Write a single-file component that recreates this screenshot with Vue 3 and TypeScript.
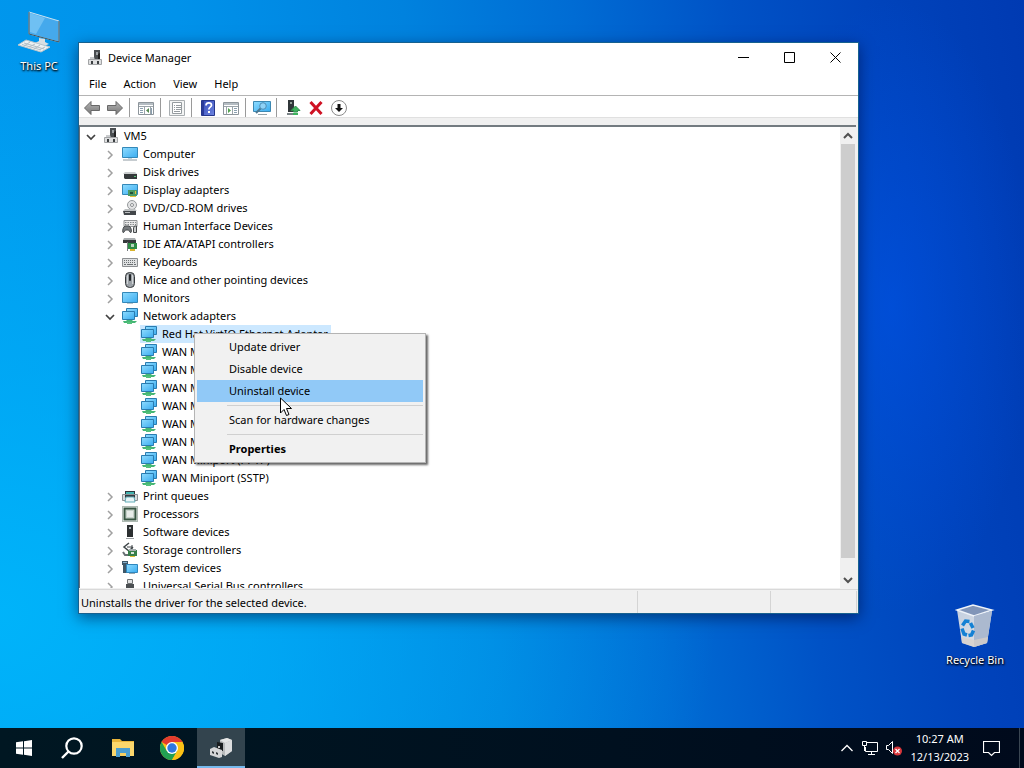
<script setup lang="ts">
import { ref } from 'vue'

interface TreeNode {
  label: string
  icon: string
  open?: boolean
  selected?: boolean
  children?: TreeNode[]
}

interface TreeRow {
  node: TreeNode
  level: number
  hasExpander: boolean
}

const adapters: TreeNode[] = [
  { label: 'Red Hat VirtIO Ethernet Adapter', icon: 'network', selected: true },
  ...['IKEv2', 'IP', 'IPv6', 'L2TP', 'Network Monitor', 'PPPOE', 'PPTP', 'SSTP'].map((name) => ({
    label: `WAN Miniport (${name})`,
    icon: 'network',
  })),
]

const categories: TreeNode[] = [
  { label: 'Computer', icon: 'computer' },
  { label: 'Disk drives', icon: 'disk' },
  { label: 'Display adapters', icon: 'display' },
  { label: 'DVD/CD-ROM drives', icon: 'dvd' },
  { label: 'Human Interface Devices', icon: 'hid' },
  { label: 'IDE ATA/ATAPI controllers', icon: 'ide' },
  { label: 'Keyboards', icon: 'keyboard' },
  { label: 'Mice and other pointing devices', icon: 'mouse' },
  { label: 'Monitors', icon: 'monitor' },
  { label: 'Network adapters', icon: 'network', open: true, children: adapters },
  { label: 'Print queues', icon: 'printer' },
  { label: 'Processors', icon: 'cpu' },
  { label: 'Software devices', icon: 'software' },
  { label: 'Storage controllers', icon: 'storage' },
  { label: 'System devices', icon: 'system' },
  { label: 'Universal Serial Bus controllers', icon: 'usb' },
]

const root: TreeNode = { label: 'VM5', icon: 'devmgr', open: true, children: categories }

function flatten(node: TreeNode, level: number): TreeRow[] {
  const own: TreeRow = { node, level, hasExpander: level < 2 }
  return node.open && node.children
    ? [own, ...node.children.flatMap((child) => flatten(child, level + 1))]
    : [own]
}

const rows = ref<TreeRow[]>(flatten(root, 0))

const menus = ['File', 'Action', 'View', 'Help']

const toolGroups: { icon: string; label: string }[][] = [
  [
    { icon: 'back', label: 'Back' },
    { icon: 'forward', label: 'Forward' },
  ],
  [{ icon: 'console', label: 'Show/Hide Console Tree' }],
  [{ icon: 'properties', label: 'Properties' }],
  [
    { icon: 'help', label: 'Help' },
    { icon: 'action', label: 'Show/Hide Action Pane' },
  ],
  [{ icon: 'scan', label: 'Scan for hardware changes' }],
  [
    { icon: 'update', label: 'Update driver' },
    { icon: 'remove', label: 'Uninstall device' },
    { icon: 'disable', label: 'Disable device' },
  ],
]

const contextGroups: { label: string; active?: boolean; strong?: boolean }[][] = [
  [{ label: 'Update driver' }, { label: 'Disable device' }, { label: 'Uninstall device', active: true }],
  [{ label: 'Scan for hardware changes' }],
  [{ label: 'Properties', strong: true }],
]
</script>

<template>
  <svg class="sprite" aria-hidden="true">
    <defs>
      <linearGradient id="g-screen" x1="0" y1="0" x2="1" y2="1">
        <stop offset="0" stop-color="#8fdcff" />
        <stop offset="1" stop-color="#3aacf0" />
      </linearGradient>
      <linearGradient id="g-arrow" x1="0" y1="0" x2="0" y2="1">
        <stop offset="0" stop-color="#b5b5b5" />
        <stop offset="1" stop-color="#777" />
      </linearGradient>
      <linearGradient id="g-help" x1="0" y1="0" x2="1" y2="1">
        <stop offset="0" stop-color="#2f45b5" />
        <stop offset="1" stop-color="#6f86e0" />
      </linearGradient>
      <linearGradient id="g-bin" x1="0" y1="0" x2="1" y2="1">
        <stop offset="0" stop-color="#c3cfe0" />
        <stop offset="1" stop-color="#e4e4e6" />
      </linearGradient>
    </defs>
    <symbol id="devmgr" viewBox="0 0 16 16">
      <path d="M7 0h6v10H7z" fill="#4a4e51" />
      <path d="M9 2h2v3H9z" fill="#9da2a6" />
      <path d="M11 4l2-1v6h-2z" fill="#222" />
      <path d="M3 7h4l1 3h6v2H3z" fill="#c9cbcd" />
      <path d="M1.500 9.500h13v5h-13z" fill="#dedfe0" stroke="#a2a4a6" />
      <path d="M4 11h2v3H4zM10 11h2v3h-2z" fill="#3b3f42" />
    </symbol>
    <symbol id="computer" viewBox="0 0 16 16">
      <path d="M.5 1.500h15v10H.5z" fill="url(#g-screen)" stroke="#3488b8" />
      <path d="M6 12h4v1H6z" fill="#c0d5e0" />
      <path d="M1 14h14" stroke="#8d9aa1" />
    </symbol>
    <symbol id="monitor" viewBox="0 0 16 16">
      <path d="M.5 2.500h15v10H.5z" fill="url(#g-screen)" stroke="#3488b8" />
      <path d="M5 13.500h6" stroke="#b9c5cb" />
    </symbol>
    <symbol id="disk" viewBox="0 0 16 16">
      <path d="M3 8h10l2 2H1z" fill="#c9cccd" />
      <path d="M2 10h13v5H3l-1-1z" fill="#35393b" />
      <path d="M12 12h2v1h-2z" fill="#59c77a" />
    </symbol>
    <symbol id="display" viewBox="0 0 16 16">
      <path d="M.5 2.500h15v10H.5z" fill="url(#g-screen)" stroke="#3488b8" />
      <path d="M6 8h9v6H6z" fill="#4a9a67" />
      <path d="M8 10h3v2H8z" fill="#235238" />
      <path d="M8 14h6v1H8zM13 9h1v3h-1z" fill="#e3bf3b" />
    </symbol>
    <symbol id="dvd" viewBox="0 0 16 16">
      <circle cx="10" cy="5" r="4.500" fill="#e3e4e5" stroke="#96999b" />
      <circle cx="10" cy="5" r="1.500" fill="#fff" stroke="#8b8e90" />
      <path d="M3 9h10l2 2H1z" fill="#bdc0c1" />
      <path d="M1 11h13v4H2z" fill="#43474a" />
      <path d="M3 12h5v1H3z" fill="#babdbf" />
    </symbol>
    <symbol id="hid" viewBox="0 0 16 16">
      <path d="M2 2.500h13v6H2z" fill="#e9e9e9" stroke="#929597" />
      <path d="M3 4.500h11M3 6.500h11" stroke="#868a8c" stroke-dasharray="1.500 1" />
      <path d="M1 14.500c-1-2 .5-6 2-6.500h4c2 1 3 5 2 6.500-1 .5-2-2-2.500-2.500h-3c-.5.500-1.500 3-2.500 2.500z" fill="#777b7e" stroke="#45494b" />
      <path d="M12.500 8h2v6.500h-3V10z" fill="#cbcdce" stroke="#45494b" />
    </symbol>
    <symbol id="ide" viewBox="0 0 16 16">
      <path d="M2 2h11l1 2H1z" fill="#aaaeb0" />
      <path d="M1 4h13v3H1z" fill="#35393b" />
      <path d="M6 7h9v6H6z" fill="#2f8b45" />
      <path d="M5 6h1v9H5z" fill="#767b7e" />
      <path d="M9 8h3v3H9z" fill="#b9d5c0" />
      <path d="M8 13h5v2H8z" fill="#d9b32d" />
    </symbol>
    <symbol id="keyboard" viewBox="0 0 16 16">
      <path d="M.5 4.500h15v8H.5z" fill="#dfe1e2" stroke="#8c8f92" />
      <path d="M2 6.500h12M2 8.500h12" stroke="#6c7073" stroke-dasharray="1 1" />
      <path d="M2 10.500h2M5 10.500h6M12 10.500h2" stroke="#6c7073" />
    </symbol>
    <symbol id="mouse" viewBox="0 0 16 16">
      <rect x="3.500" y=".5" width="9" height="15" rx="4" fill="#9ba1a6" stroke="#35393c" />
      <path d="M5.500 3v9M10.500 3v9" stroke="#d1d5d8" />
      <rect x="7" y="2" width="2" height="7" rx="1" fill="#23272a" />
    </symbol>
    <symbol id="network" viewBox="0 0 16 16">
      <path d="M4.500.5h11v8h-11z" fill="url(#g-screen)" stroke="#2a7cb0" />
      <path d="M.5 3.500h12v8H.5z" fill="url(#g-screen)" stroke="#2a7cb0" />
      <path d="M5 12h5l1 1h4l-2 2H2l-1-2h3z" fill="#45b774" />
      <path d="M5 14h5v2H5z" fill="#55c07c" />
    </symbol>
    <symbol id="printer" viewBox="0 0 16 16">
      <path d="M3 3h10v3H3z" fill="#30393d" />
      <path d="M4 4h8v2H4z" fill="#42b5b2" />
      <path d="M.5 6.500h15v6H.5z" fill="#d9dcdd" stroke="#8b9194" />
      <path d="M3 7h10v3H3z" fill="#343c40" />
      <path d="M4 9h8l1 5H3z" fill="#eaf6f8" stroke="#65adb8" />
    </symbol>
    <symbol id="cpu" viewBox="0 0 16 16">
      <path d="M.5.5h15v15H.5z" fill="none" stroke="#5d7466" stroke-dasharray="1 1" />
      <path d="M2.500 2.500h11v11h-11z" fill="#c5d1c9" stroke="#375542" stroke-width="2" />
      <path d="M5 5h6v6H5z" fill="#e7ece9" />
    </symbol>
    <symbol id="software" viewBox="0 0 16 16">
      <path d="M5 1h6v12H5z" fill="#2b2f31" />
      <path d="M7 3h2v2H7z" fill="#a9afb3" />
      <path d="M4 14h8v1H4z" fill="#9ba0a3" />
    </symbol>
    <symbol id="storage" viewBox="0 0 16 16">
      <path d="M7 1L2 5l5 4 4-4" fill="none" stroke="#3e4548" stroke-width="1.500" />
      <path d="M5 5h5M10 3v4" stroke="#3e4548" />
      <path d="M1 10l2 3h3" fill="none" stroke="#687174" stroke-width="2" />
      <path d="M6 8h9v6H6z" fill="#377e4a" />
      <path d="M7 7h7v2H7z" fill="#a5adaf" />
      <path d="M9 10h3v2H9z" fill="#d9e4dc" />
      <path d="M8 14h5v1H8z" fill="#e2bd32" />
    </symbol>
    <symbol id="system" viewBox="0 0 16 16">
      <path d="M0 1h6v12H1V5H0z" fill="#3e5768" />
      <path d="M1 2h4v1H1z" fill="#82aec9" />
      <path d="M4.500 4.500h11v8h-11z" fill="url(#g-screen)" stroke="#2f86bd" />
      <path d="M7 13.500h6" stroke="#9aaab2" />
    </symbol>
    <symbol id="usb" viewBox="0 0 16 16">
      <path d="M5.500 1.500h5v4h-5z" fill="#e0e1e2" stroke="#6e7274" />
      <path d="M4 6h8v7l-2 3H6l-2-3z" fill="#4b4f52" />
    </symbol>

    <symbol id="back" viewBox="0 0 16 16">
      <path d="M.5 8l6.500-6.500v4h8.500v5H7v4z" fill="url(#g-arrow)" stroke="#686868" />
    </symbol>
    <symbol id="forward" viewBox="0 0 16 16">
      <path d="M15.500 8L9 1.500v4H.5v5H9v4z" fill="url(#g-arrow)" stroke="#686868" />
    </symbol>
    <symbol id="console" viewBox="0 0 16 16">
      <path d="M.5 2.500h15v12H.5z" fill="#fff" stroke="#8d959b" />
      <path d="M1 3h14v2H1z" fill="#b5bdc3" />
      <path d="M1 6.500h14M6.500 7v7M12.500 7v7" stroke="#9ba4aa" />
      <path d="M2 8.500h3M2 10.500h3M2 12.500h3M13.500 8v6" stroke="#8ba0b0" />
      <path d="M11 8v5l-3-2.500z" fill="#568a53" />
    </symbol>
    <symbol id="action" viewBox="0 0 16 16">
      <path d="M.5 2.500h15v12H.5z" fill="#fff" stroke="#8d959b" />
      <path d="M1 3h14v2H1z" fill="#b5bdc3" />
      <path d="M1 6.500h14M3.500 7v7M9.500 7v7" stroke="#9ba4aa" />
      <path d="M11 8.500h3M11 10.500h3M11 12.500h3" stroke="#8ba0b0" />
      <path d="M5 8v5l3-2.500z" fill="#53a34f" />
    </symbol>
    <symbol id="properties" viewBox="0 0 16 16">
      <path d="M.5.5h15v15H.5z" fill="#f4f5f5" stroke="#a9aeb1" />
      <path d="M3.500 2.500h9v11h-9z" fill="#fff" stroke="#959b9f" />
      <path d="M5 5.500h1M7 5.500h5M5 7.500h1M7 7.500h5M5 9.500h1M7 9.500h5M5 11.500h6" stroke="#959b9f" />
    </symbol>
    <symbol id="help" viewBox="0 0 16 16">
      <path d="M1.500.5h13v15h-13z" fill="url(#g-help)" stroke="#26378c" />
      <path d="M2 1h2v14H2z" fill="#293a99" />
      <path d="M6 5.500C6 2 11.500 2.300 11.500 5.200c0 2-2.700 2-2.700 4.300" fill="none" stroke="#fff" stroke-width="1.700" />
      <path d="M8 11h2v2H8z" fill="#fff" />
    </symbol>
    <symbol id="scan" viewBox="0 0 18 16">
      <path d="M.5 1.500h17v10H.5z" fill="url(#g-screen)" stroke="#3c88b2" />
      <circle cx="10" cy="6" r="3.300" fill="#8fd2f7" stroke="#4f8db5" />
      <path d="M7.500 8.500L3 13" stroke="#4c7790" stroke-width="2" />
      <path d="M5 14.500h9" stroke="#95a2a9" />
    </symbol>
    <symbol id="update" viewBox="0 0 16 16">
      <path d="M3 0h6v12H3z" fill="#303639" />
      <path d="M5 2h2v2H5z" fill="#93a19a" />
      <path d="M2 13h7v2H2z" fill="#7b8487" />
      <path d="M10.500 6L15 10.500h-2.500V12h-4v-1.500H6z" fill="#3db25d" stroke="#2f8f4c" />
      <path d="M8 14h5" stroke="#3db25d" stroke-width="2" />
    </symbol>
    <symbol id="remove" viewBox="0 0 16 16">
      <path d="M2.500 2l11 12M13.500 2l-11 12" stroke="#cf1224" stroke-width="3" />
    </symbol>
    <symbol id="disable" viewBox="0 0 16 16">
      <circle cx="8" cy="8" r="7.500" fill="#fff" stroke="#8a8a8a" />
      <path d="M6.500 4h3v4H12l-4 4-4-4h2.500z" fill="#111" />
    </symbol>
  </svg>

  <div class="screen">
    <main class="desktop">
      <button class="shortcut pc" type="button">
        <svg width="44" height="44" viewBox="0 0 44 44" aria-hidden="true">
          <path d="M12 1l30 9v21l-30-8z" fill="#45a9ec" stroke="#c8e2f1" />
          <path d="M13 2l15 5-9 16-6-2z" fill="#6fc0f3" />
          <path d="M42 10v21l-30-8V1" fill="none" stroke="#36515f" />
          <path d="M22 27l6 1v3l4 2-5 2-9-3 4-2z" fill="#d9dfe3" />
          <path d="M9 29l24 7-9 5L1 34z" fill="#edf1f3" stroke="#bac5cb" />
          <path d="M7 32l20 6M5 33.500l19 5.500M13 31l-6 4M18 33l-6 3M23 34l-6 4M28 36l-6 3" stroke="#b2bec5" />
        </svg>
        <span>This PC</span>
      </button>

      <button class="shortcut bin" type="button">
        <svg width="44" height="46" viewBox="0 0 44 46" aria-hidden="true">
          <path d="M4 7l17 6 18-5-5 32-13 4-12-4z" fill="url(#g-bin)" />
          <path d="M4 7l16-5 19 5-18 6z" fill="#8195b8" stroke="#eef3f9" stroke-width="1.500" />
          <path d="M21 13l18-5-5 32-13 4z" fill="#abb9cf" />
          <path d="M8 34l13 3 14-3-1 6-13 4-12-4z" fill="#d8d0c8" opacity=".7" />
          <path d="M9.500 22.500l3-4.500 4 .5M17.500 20l2.500 5" fill="none" stroke="#1481d4" stroke-width="3.500" />
          <path d="M9 25.500l2 5.500 3 1M20.500 27.500L18.500 32l-3 .5" fill="none" stroke="#1481d4" stroke-width="3.500" />
        </svg>
        <span>Recycle Bin</span>
      </button>

      <section class="window" aria-label="Device Manager">
        <header class="titlebar">
          <svg class="icon" aria-hidden="true"><use href="#devmgr" /></svg>
          <h1>Device Manager</h1>
          <div class="caption">
            <button type="button" aria-label="Minimize">
              <svg width="11" height="11"><path d="M0 5.500h11" stroke="#000" /></svg>
            </button>
            <button type="button" aria-label="Maximize">
              <svg width="11" height="11"><path d="M.5.5h10v10H.5z" fill="none" stroke="#000" /></svg>
            </button>
            <button type="button" aria-label="Close">
              <svg width="11" height="11"><path d="M.5.5l10 10M10.500.5l-10 10" stroke="#000" /></svg>
            </button>
          </div>
        </header>

        <nav class="menubar">
          <button v-for="item in menus" :key="item" type="button">{{ item }}</button>
        </nav>

        <div class="toolbar" role="toolbar" aria-label="Tools">
          <div v-for="(group, index) in toolGroups" :key="index" class="tool-group">
            <button v-for="tool in group" :key="tool.icon" type="button" :aria-label="tool.label">
              <svg :class="['icon', { wide: tool.icon === 'scan' }]" aria-hidden="true"><use :href="'#' + tool.icon" /></svg>
            </button>
          </div>
        </div>

        <div class="pane">
          <ul class="tree" role="tree">
            <li
              v-for="(row, index) in rows"
              :key="index"
              :class="['row', 'level-' + row.level]"
              role="treeitem"
              :aria-level="row.level + 1"
            >
              <button v-if="row.hasExpander" class="expander" type="button" aria-label="Expand or collapse">
                <svg v-if="row.node.open" width="10" height="10" aria-hidden="true">
                  <path d="M1 3l4 4 4-4" fill="none" stroke="#404040" stroke-width="1.700" />
                </svg>
                <svg v-else width="10" height="10" aria-hidden="true">
                  <path d="M3 1l4 4-4 4" fill="none" stroke="#a0a0a0" stroke-width="1.500" />
                </svg>
              </button>
              <span v-else class="expander"></span>
              <button type="button" :class="['node', { selected: row.node.selected }]">
                <svg class="icon" aria-hidden="true"><use :href="'#' + row.node.icon" /></svg>
                <span>{{ row.node.label }}</span>
              </button>
            </li>
          </ul>
          <div class="scrollbar">
            <button type="button" aria-label="Scroll up">
              <svg width="10" height="10"><path d="M1 7l4-4 4 4" fill="none" stroke="#505050" stroke-width="2" /></svg>
            </button>
            <div class="track"><div class="thumb"></div></div>
            <button type="button" aria-label="Scroll down">
              <svg width="10" height="10"><path d="M1 3l4 4 4-4" fill="none" stroke="#505050" stroke-width="2" /></svg>
            </button>
          </div>
        </div>

        <footer class="status">
          <span class="message">Uninstalls the driver for the selected device.</span>
          <span class="cell"></span>
          <span class="cell last"></span>
        </footer>
      </section>

      <div class="context" role="menu">
        <div v-for="(group, index) in contextGroups" :key="index" class="context-group">
          <button
            v-for="item in group"
            :key="item.label"
            type="button"
            role="menuitem"
            :class="{ active: item.active, strong: item.strong }"
          >
            {{ item.label }}
          </button>
        </div>
      </div>

      <svg class="pointer" width="13" height="20" viewBox="0 0 13 20" aria-hidden="true">
        <path d="M.5 1v15l3.500-3.500 2.500 6 2.500-1-2.500-6h5z" fill="#fff" stroke="#000" />
      </svg>
    </main>

    <footer class="taskbar">
      <button class="task" type="button" aria-label="Start">
        <svg width="16" height="16" viewBox="0 0 16 16">
          <path d="M0 2.300L7 1.300V7.500H0zM8 1.200L16 0v7.500H8zM0 8.500h7v6.200L0 13.700zM8 8.500h8V16l-8-1.200z" fill="#fff" />
        </svg>
      </button>
      <button class="task" type="button" aria-label="Search">
        <svg width="22" height="22" viewBox="0 0 22 22">
          <circle cx="13" cy="9" r="7.700" fill="none" stroke="#fff" stroke-width="2.200" />
          <path d="M7.500 14.500L1 21" stroke="#fff" stroke-width="2.400" />
        </svg>
      </button>
      <div class="apps">
        <button class="task" type="button" aria-label="File Explorer">
          <svg width="22" height="20" viewBox="0 0 22 20">
            <path d="M0 1h8l2 2h12v15H0z" fill="#e9b53a" />
            <path d="M0 4h22v14H0z" fill="#fbd76c" />
            <path d="M4 10h14v9h-4v-4H8v4H4z" fill="#4a9dd0" />
            <path d="M8 15h6v3H8z" fill="#f6cf61" />
          </svg>
        </button>
        <button class="task" type="button" aria-label="Google Chrome">
          <svg width="24" height="24" viewBox="0 0 24 24">
            <circle cx="12" cy="12" r="12" fill="#fbc116" />
            <path d="M12 12L1.600 6A12 12 0 0 1 22.400 6z" fill="#e33b2e" />
            <path d="M12 6h10.400" stroke="#e33b2e" />
            <path d="M1.600 6A12 12 0 0 0 12 24l5.200-9L12 12 6.800 15z" fill="#22a052" />
            <path d="M12 24A12 12 0 0 0 22.400 6H12l5.200 9z" fill="#fbc116" />
            <circle cx="12" cy="12" r="6" fill="#fff" />
            <circle cx="12" cy="12" r="4.700" fill="#2f78e0" />
          </svg>
        </button>
        <button class="task current" type="button" aria-label="Device Manager">
          <svg width="22" height="22" viewBox="0 0 22 22">
            <path d="M10 3l7-2 5 2v11l-7 5-5-3z" fill="#b8babb" />
            <path d="M10 3l7-2 5 2-7 3z" fill="#e5e6e6" />
            <path d="M15 6l7-3v11l-7 5z" fill="#dcddde" />
            <path d="M7 5l6 1v8l-6-1z" fill="#191c1e" />
            <path d="M8 9h2v2H8z" fill="#c3c5c6" />
            <path d="M0 12l4-2 8 3v7l-3 1-9-3z" fill="#d5d6d7" />
            <path d="M2 14l2 1v2l-2-1zM6 15l2 1v2l-2-1z" fill="#33383b" />
          </svg>
        </button>
      </div>

      <div class="tray">
        <button type="button" aria-label="Show hidden icons">
          <svg width="14" height="16" viewBox="0 0 14 16"><path d="M1.500 11L7 5.500l5.500 5.500" fill="none" stroke="#fff" stroke-width="1.300" /></svg>
        </button>
        <button type="button" aria-label="Network">
          <svg width="16" height="16" viewBox="0 0 16 16">
            <path d="M5 2.500h10.500v9H3.500V7M9.500 12v2.500M6 14.500h7M.5 1.500h4v4h-4zM2.500 6v5" fill="none" stroke="#fff" />
          </svg>
        </button>
        <button type="button" aria-label="Volume, muted">
          <svg width="16" height="16" viewBox="0 0 16 16">
            <path d="M.5 5.500h2l4-4v12l-4-4h-2z" fill="none" stroke="#fff" />
            <circle cx="11.500" cy="11" r="4.500" fill="#d8363b" />
            <path d="M9.500 9l4 4M13.500 9l-4 4" stroke="#fff" stroke-width="1.200" />
          </svg>
        </button>
        <button class="clock" type="button">
          <time datetime="2023-12-13T10:27">10:27 AM<br />12/13/2023</time>
        </button>
        <button class="notify" type="button" aria-label="Notifications">
          <svg width="17" height="17" viewBox="0 0 17 17">
            <path d="M.5 1.500h16v11h-5l-3 3-3-3h-5z" fill="none" stroke="#fff" stroke-width="1.200" />
          </svg>
        </button>
      </div>
    </footer>
  </div>
</template>

<style>
html,
body {
  margin: 0;
}
</style>

<style scoped>
.sprite {
  position: absolute;
  width: 0;
  height: 0;
}
.screen {
  display: flex;
  flex-direction: column;
  height: 100vh;
  overflow: hidden;
  font-family: 'Noto Sans', 'Open Sans', sans-serif;
  font-size: 11px;
  line-height: 18px;
  color: #000;
  background:
    radial-gradient(ellipse 14% 40% at 87% 40%, rgba(0, 84, 235, 0.55), transparent),
    radial-gradient(ellipse 70% 75% at 0% 80%, rgba(0, 184, 252, 0.85), transparent),
    linear-gradient(82deg, #0099ee 0%, #0092ea 25%, #0082de 45%, #006cd4 60%, #0052c6 74%, #0044bc 86%, #003ab2 100%);
}
button {
  margin: 0;
  padding: 0;
  border: 0;
  background: none;
  font: inherit;
  color: inherit;
}
svg {
  flex: none;
  display: block;
}
.icon {
  width: 16px;
  height: 16px;
}
.icon.wide {
  width: 18px;
}
.desktop {
  position: relative;
  flex: 1;
}
.shortcut {
  position: absolute;
  display: flex;
  flex-direction: column;
  align-items: center;
  gap: 2px;
  width: 76px;
  color: #fff;
  text-shadow: 1px 1px 2px #000, 0 1px 2px #000;
}
.pc {
  left: 1px;
  top: 11px;
}
.bin {
  right: 11px;
  bottom: 59px;
}
.window {
  position: absolute;
  top: 42px;
  right: 165px;
  bottom: 114px;
  left: 78px;
  display: flex;
  flex-direction: column;
  border: 1px solid #17618f;
  background: #f0f0f0;
  box-shadow: 0 4px 14px rgba(0, 0, 40, 0.5);
}
.titlebar {
  display: flex;
  align-items: center;
  height: 29px;
  padding-left: 8px;
  background: #fff;
}
.titlebar h1 {
  flex: 1;
  margin: 0 0 0 5px;
  font-size: 11px;
  font-weight: 400;
}
.caption {
  display: flex;
  align-self: stretch;
}
.caption button {
  display: grid;
  place-items: center;
  width: 46px;
}
.menubar {
  display: flex;
  gap: 1px;
  height: 23px;
  padding-left: 2px;
  border-bottom: 1px solid #b4b4b4;
  background: #fff;
}
.menubar button {
  padding: 0 8px;
}
.toolbar {
  display: flex;
  height: 22px;
  padding: 2px 1px 0;
  border-bottom: 1px solid #e0e0e0;
  background: #fff;
  box-sizing: border-box;
}
.tool-group {
  display: flex;
}
.tool-group + .tool-group {
  margin-left: 3px;
  padding-left: 4px;
  border-left: 1px solid #9a9a9a;
}
.toolbar button {
  display: grid;
  place-items: center;
  width: 23px;
}
.pane {
  display: flex;
  flex: 1;
  min-height: 0;
  margin: 7px 2px 0 0;
  border-top: 2px solid #737b80;
  border-left: 1px solid #66707a;
  background: #fff;
}
.tree {
  flex: 1;
  min-width: 0;
  margin: 0;
  padding: 0;
  overflow: hidden;
  list-style: none;
}
.row {
  display: flex;
  height: 18px;
  padding-left: 3px;
}
.level-1 {
  padding-left: 22px;
}
.level-2 {
  padding-left: 41px;
}
.expander {
  display: grid;
  place-items: center;
  width: 16px;
  margin-right: 3px;
  padding-top: 2px;
}
.node {
  display: flex;
  align-items: center;
  gap: 5px;
  padding: 0 3px 0 1px;
  white-space: nowrap;
}
.node.selected {
  background: #cce8ff;
}
.scrollbar {
  display: flex;
  flex-direction: column;
  width: 16px;
  background: #f0f0f0;
}
.scrollbar button {
  display: grid;
  place-items: center;
  height: 17px;
}
.track {
  flex: 1;
  padding: 0 1px;
}
.thumb {
  height: 97%;
  background: #cdcdcd;
}
.status {
  display: flex;
  height: 22px;
  margin-top: 1px;
  padding: 1px 1px 0 2px;
  border-top: 1px solid #d9d9d9;
}
.message {
  flex: 1;
  line-height: 24px;
}
.cell {
  width: 132px;
  border-left: 1px solid #d4d4d4;
}
.cell.last {
  width: 85px;
  border-right: 1px solid #d4d4d4;
}
.context {
  position: absolute;
  top: 333px;
  left: 194px;
  width: 226px;
  padding: 2px;
  border: 1px solid #b4b4b4;
  background: #f1f1f1;
  box-shadow: 2px 2px 2px rgba(0, 0, 0, 0.6);
}
.context-group + .context-group::before {
  content: '';
  display: block;
  height: 1px;
  margin: 3px 0 3px 30px;
  background: #d0d0d0;
}
.context button {
  display: block;
  width: 100%;
  height: 22px;
  padding-left: 32px;
  text-align: left;
}
.context .active {
  background: #91c9f7;
}
.context .strong {
  font-weight: 700;
}
.pointer {
  position: absolute;
  top: 397px;
  left: 280px;
}
.taskbar {
  display: flex;
  height: 40px;
  color: #fff;
  background: linear-gradient(90deg, #001722, #00101f 60%, #000a1c);
}
.task {
  display: grid;
  place-items: center;
  width: 48px;
}
.apps {
  display: flex;
  gap: 1px;
  margin-left: 3px;
}
.task.current {
  background: #33444e;
  box-shadow: inset 0 -2px #76b9ed;
}
.tray {
  display: flex;
  align-items: center;
  gap: 8px;
  margin-left: auto;
  padding-right: 4px;
}
.clock {
  line-height: 18px;
  text-align: center;
  white-space: nowrap;
}
.notify {
  display: grid;
  place-items: center;
  align-self: stretch;
  margin-left: 6px;
  padding-right: 19px;
  border-right: 1px solid #3a4652;
}
</style>
